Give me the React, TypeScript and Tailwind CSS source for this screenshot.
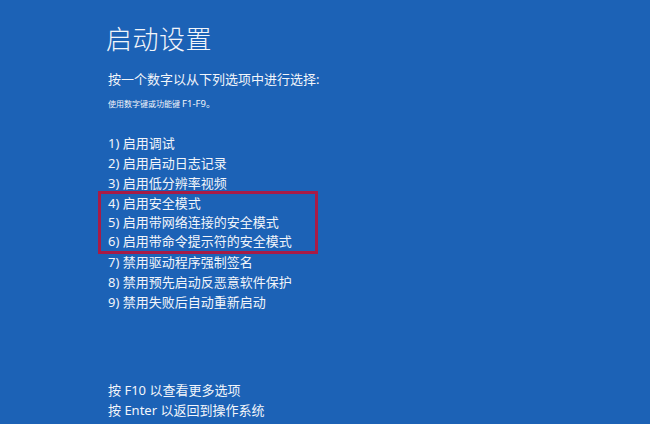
import React from 'react';

const options = [
  '1) 启用调试',
  '2) 启用启动日志记录',
  '3) 启用低分辨率视频',
  '4) 启用安全模式',
  '5) 启用带网络连接的安全模式',
  '6) 启用带命令提示符的安全模式',
  '7) 禁用驱动程序强制签名',
  '8) 禁用预先启动反恶意软件保护',
  '9) 禁用失败后自动重新启动',
];

const font = { fontFamily: '"Noto Sans", "Noto Sans CJK SC", sans-serif' };

export default function App() {
  const before = options.slice(0, 3);
  const safe = options.slice(3, 6);
  const after = options.slice(6);

  return (
    <div
      className="w-[650px] h-[424px] overflow-hidden bg-[#1c62b6] text-[#f2f5fa] pl-[108px] pt-[24px] flex flex-col"
      style={font}
    >
      <h1 className="-ml-[2px] text-[26px] leading-[30px] font-light tracking-[0.5px]">启动设置</h1>

      <p className="mt-[15px] text-[13px] leading-[20px]">按一个数字以从下列选项中进行选择:</p>

      <p className="mt-[9px] text-[8px] leading-[12px]">
        使用数字键或功能键 <span className="text-[9.5px]">F1-F9。</span>
      </p>

      <div className="mt-[23px] flex flex-col text-[13px] leading-[20px]">
        {before.map((o) => (
          <div key={o}>{o}</div>
        ))}
        {/* highlighted safe-mode options */}
        <div className="-ml-[10px] -my-[2px] w-[220px] pl-[7px] border-[3px] border-[#a81b46] flex flex-col">
          {safe.map((o) => (
            <div key={o} className="leading-[19px]">{o}</div>
          ))}
        </div>
        {after.map((o) => (
          <div key={o}>{o}</div>
        ))}
      </div>

      <div className="mt-[68px] flex flex-col text-[13px] leading-[20px]">
        <div>按 F10 以查看更多选项</div>
        <div>按 Enter 以返回到操作系统</div>
      </div>
    </div>
  );
}
